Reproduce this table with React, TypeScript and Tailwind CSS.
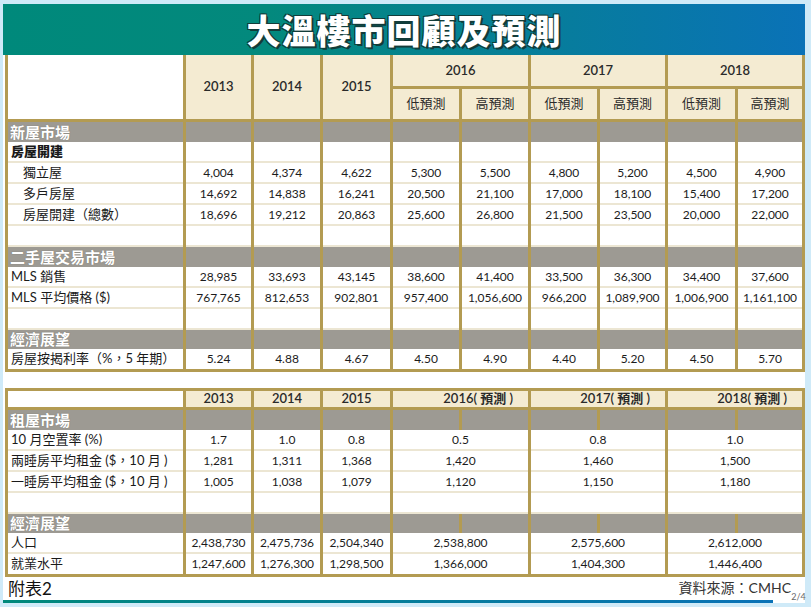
import React from "react";

type Row = { label: string; values?: string[]; bold?: boolean; indent?: boolean };
type Section = { title: string; rows: Row[] };

const FONT = "font-['Lato','Noto_Sans_CJK_TC',sans-serif]";

const TABLE1: Section[] = [
  {
    title: "新屋市場",
    rows: [
      { label: "房屋開建", bold: true },
      { label: "獨立屋", indent: true, values: ["4,004", "4,374", "4,622", "5,300", "5,500", "4,800", "5,200", "4,500", "4,900"] },
      { label: "多戶房屋", indent: true, values: ["14,692", "14,838", "16,241", "20,500", "21,100", "17,000", "18,100", "15,400", "17,200"] },
      { label: "房屋開建（總數）", indent: true, values: ["18,696", "19,212", "20,863", "25,600", "26,800", "21,500", "23,500", "20,000", "22,000"] },
      { label: "" },
    ],
  },
  {
    title: "二手屋交易市場",
    rows: [
      { label: "MLS 銷售", values: ["28,985", "33,693", "43,145", "38,600", "41,400", "33,500", "36,300", "34,400", "37,600"] },
      { label: "MLS 平均價格 ($)", values: ["767,765", "812,653", "902,801", "957,400", "1,056,600", "966,200", "1,089,900", "1,006,900", "1,161,100"] },
      { label: "" },
    ],
  },
  {
    title: "經濟展望",
    rows: [
      { label: "房屋按揭利率（%，5 年期）", values: ["5.24", "4.88", "4.67", "4.50", "4.90", "4.40", "5.20", "4.50", "5.70"] },
    ],
  },
];

const TABLE2: Section[] = [
  {
    title: "租屋市場",
    rows: [
      { label: "10 月空置率 (%)", values: ["1.7", "1.0", "0.8", "0.5", "0.8", "1.0"] },
      { label: "兩睡房平均租金 ($，10 月 )", values: ["1,281", "1,311", "1,368", "1,420", "1,460", "1,500"] },
      { label: "一睡房平均租金 ($，10 月 )", values: ["1,005", "1,038", "1,079", "1,120", "1,150", "1,180"] },
      { label: "" },
    ],
  },
  {
    title: "經濟展望",
    rows: [
      { label: "人口", values: ["2,438,730", "2,475,736", "2,504,340", "2,538,800", "2,575,600", "2,612,000"] },
      { label: "就業水平", values: ["1,247,600", "1,276,300", "1,298,500", "1,366,000", "1,404,300", "1,446,400"] },
    ],
  },
];

const GRID =
  "grid grid-cols-[175px_65px_66px_67px_66px_66px_66px_65px_67px_64px] gap-x-[3px] bg-[#b39b52] px-[3px] pb-[3px] ml-[2px] w-[800px]";

function GrayBand({ title, h }: { title: string; h: string }) {
  return (
    <>
      <div className={`${h} bg-[#9d9a93] flex items-center pl-[2px] text-[15px] font-bold text-white [text-shadow:0_0_1px_#6b6964]`}>
        {title}
      </div>
      {Array.from({ length: 9 }).map((_, i) => (
        <div key={i} className={`${h} bg-[#9d9a93]`} />
      ))}
    </>
  );
}

function DataRow({ row, last, wide }: { row: Row; last: boolean; wide: boolean }) {
  const cellBase = last
    ? "h-[20px] bg-white flex items-center justify-center"
    : "h-[21px] bg-white border-b-2 border-[#ece6d3] flex items-center justify-center";
  const cells = wide ? 6 : 9;
  return (
    <>
      <div
        className={`${cellBase} !justify-start text-[13px] text-[#1a1a1a] ${row.indent ? "pl-[15px]" : "pl-[3px]"} ${
          row.bold ? "font-black" : ""
        }`}
      >
        {row.label}
      </div>
      {Array.from({ length: cells }).map((_, i) => (
        <div key={i} className={`${cellBase} text-[12px] text-[#1c1c1c] ${wide && i >= 3 ? "col-span-2" : ""}`}>
          {row.values ? row.values[i] : ""}
        </div>
      ))}
    </>
  );
}

function Body({ sections, wide, bandHeights }: { sections: Section[]; wide: boolean; bandHeights: string[] }) {
  return (
    <>
      {sections.map((s, si) => (
        <React.Fragment key={s.title + si}>
          <GrayBand title={s.title} h={bandHeights[si]} />
          {s.rows.map((r, ri) => (
            <DataRow key={ri} row={r} wide={wide} last={si === sections.length - 1 && ri === s.rows.length - 1} />
          ))}
        </React.Fragment>
      ))}
    </>
  );
}

export default function App() {
  const head = "bg-[#f4ebd2] border-b-[3px] border-[#b39b52] flex items-center justify-center text-[#2a2a2a]";
  return (
    <div className={`w-[811px] h-[607px] bg-[#cfeaf8] pt-[4px] pl-[3px] ${FONT}`}>
      <div className="w-[802px] h-[599px] bg-white flex flex-col">
        {/* title */}
        <div className="h-[51px] bg-[linear-gradient(90deg,#00897b_0%,#03897d_33%,#0a72b7_100%)] flex items-center justify-center">
          <span className="text-[34px] font-black text-white leading-none tracking-[1px] font-['Noto_Sans_CJK_TC',sans-serif] [text-shadow:2px_2px_0_#123c3a,-1px_-1px_0_#123c3a,1px_-1px_0_#123c3a,-1px_1px_0_#123c3a]">
            大溫樓市回顧及預測
          </span>
        </div>

        {/* table 1 */}
        <div className={GRID}>
          <div className="row-span-2 bg-white border-b-[3px] border-[#b39b52]" />
          <div className={`${head} row-span-2 text-[13px] font-semibold`}>2013</div>
          <div className={`${head} row-span-2 text-[13px] font-semibold`}>2014</div>
          <div className={`${head} row-span-2 text-[13px] font-semibold`}>2015</div>
          <div className={`${head} col-span-2 h-[34px] text-[13px] font-semibold`}>2016</div>
          <div className={`${head} col-span-2 h-[34px] text-[13px] font-semibold`}>2017</div>
          <div className={`${head} col-span-2 h-[34px] text-[13px] font-semibold`}>2018</div>
          {["低預測", "高預測", "低預測", "高預測", "低預測", "高預測"].map((t, i) => (
            <div key={i} className={`${head} h-[33px] text-[13px]`}>
              {t}
            </div>
          ))}
          <Body sections={TABLE1} wide={false} bandHeights={["h-[20px]", "h-[20px]", "h-[19px]"]} />
        </div>

        {/* table 2 */}
        <div className={`${GRID} mt-[16px] pt-[3px]`}>
          <div className="h-[19px] bg-white border-b-[3px] border-[#b39b52]" />
          <div className={`${head} h-[19px] text-[13px] font-semibold`}>2013</div>
          <div className={`${head} h-[19px] text-[13px] font-semibold`}>2014</div>
          <div className={`${head} h-[19px] text-[13px] font-semibold`}>2015</div>
          {["2016", "2017", "2018"].map((y) => (
            <div key={y} className={`${head} col-span-2 h-[19px] !justify-end pr-[15px] text-[13px] font-semibold`}>
              {y}( 預測 )
            </div>
          ))}
          <Body sections={TABLE2} wide={true} bandHeights={["h-[20px]", "h-[19px]"]} />
        </div>

        {/* footer */}
        <div className="relative flex-1 flex items-end justify-between pl-[5px] pr-[14px] pb-[2px]">
          <span className="text-[17px] text-[#111] leading-none mb-[1px]">附表2</span>
          <span className="text-[14px] text-[#333] leading-none mb-[3px]">資料來源：CMHC</span>
          <div className="absolute right-0 bottom-[-3px] w-[13px] h-[22px] bg-white/70 flex items-end justify-center pb-[2px] text-[9px] leading-none text-[#666]">
            2/4
          </div>
        </div>
        <div className="h-[3px] bg-[linear-gradient(90deg,#00897b_0%,#0a72b7_100%)] mr-[32px]" />
      </div>
    </div>
  );
}
